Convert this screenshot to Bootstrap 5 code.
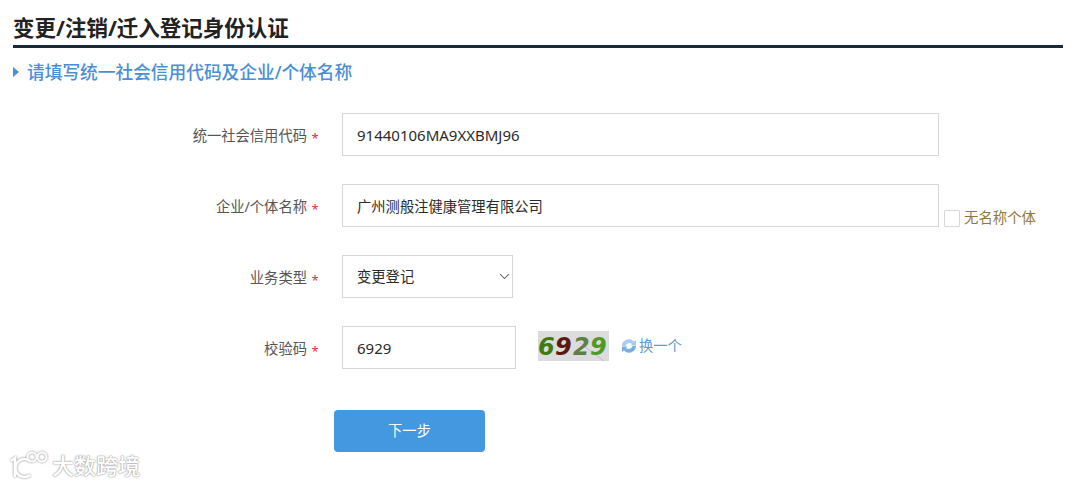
<!DOCTYPE html>
<html lang="zh-CN">
<head>
<meta charset="utf-8">
<title>变更/注销/迁入登记身份认证</title>
<link href="https://cdn.jsdelivr.net/npm/bootstrap@5.3.0/dist/css/bootstrap.min.css" rel="stylesheet">
<style>
html,body{height:485px;overflow:hidden;background:#fff}
body{font-family:"Noto Sans","Noto Sans CJK SC",sans-serif;position:relative;color:#333}
.page-wrap{padding:13px 17px 0 13px}
.main-title{font-size:21.5px;font-weight:700;line-height:30px;color:#222;margin:0;padding-bottom:2px;border-bottom:3px solid #1b2a38}
.sub-title{font-size:17.7px;font-weight:500;line-height:24px;color:#4a8fd6;margin:12px 0 0;padding-left:14px;position:relative}
.sub-title::before{content:"";position:absolute;left:0;top:7px;border-left:6px solid #4a8fd6;border-top:5px solid transparent;border-bottom:5px solid transparent}
.form-area{margin-top:29px}
.form-line{display:flex;align-items:flex-start;height:43px;margin-bottom:28px}
.label-cell{width:306px;flex:none;text-align:right;line-height:46px;font-size:14.3px;color:#555}
.label-cell i{font-style:normal;color:#d9304f;margin-left:4px;font-size:13px;display:inline-block;width:8px;text-align:center;position:relative;top:2px}
.field-cell{margin-left:23px}
.form-control.plain-input,.form-select.plain-input{height:43px;border-radius:0;border:1px solid #d6d6d6;font-size:14.3px;color:#2b2b2b;padding:0 14px;box-shadow:none;background-color:#fff}
.form-control.latin-input{font-size:15px}
.wide-input{width:597px}
.type-select{width:171px}
.code-input{width:174px}
.form-select.plain-input{background-image:url("data:image/svg+xml,%3csvg xmlns='http://www.w3.org/2000/svg' viewBox='0 0 16 16'%3e%3cpath fill='none' stroke='%23666' stroke-width='1.500' stroke-linecap='round' d='M2 5l6 6 6-6'/%3e%3c/svg%3e");background-position:right 0 center;background-size:15px 11px}
.no-name{display:flex;align-items:center;margin:25px 0 0 5px;font-size:14.4px;color:#8f7a3c;line-height:18px}
.no-name span{display:block;width:16px;height:17px;border:1px solid #d8d8d8;border-radius:1px;margin-right:4px}
.captcha-pic{display:block;margin:5px 0 0 22px;width:71px;height:30px;background:#dcdcdc}
.swap-link{display:flex;align-items:center;gap:2px;margin:6px 0 0 12px;color:#5b9bd5;font-size:14.3px;line-height:28px;text-decoration:none}
.next-btn{display:block;width:151px;height:42px;margin:41px 0 0 321px;background:#4498e0;border:0;border-radius:4px;color:#fff;font-size:14.3px;padding:0}
.next-btn:hover{background:#4498e0;color:#fff}
.mark-logo{position:absolute;left:9px;top:450px;display:flex;align-items:center;gap:3px}
.mark-text{font-size:22px;font-weight:500;line-height:30px;color:#fff;text-shadow:0 0 2px #999,0 0 1px #888}
</style>
</head>
<body>
<div class="page-wrap">
  <h1 class="main-title">变更/注销/迁入登记身份认证</h1>
  <h2 class="sub-title">请填写统一社会信用代码及企业/个体名称</h2>
  <form class="form-area" onsubmit="return false">
    <div class="form-line">
      <label class="label-cell">统一社会信用代码<i>*</i></label>
      <div class="field-cell"><input class="form-control plain-input latin-input wide-input" value="91440106MA9XXBMJ96"></div>
    </div>
    <div class="form-line">
      <label class="label-cell">企业/个体名称<i>*</i></label>
      <div class="field-cell"><input class="form-control plain-input wide-input" value="广州测般注健康管理有限公司"></div>
      <div class="no-name"><span></span>无名称个体</div>
    </div>
    <div class="form-line">
      <label class="label-cell">业务类型<i>*</i></label>
      <div class="field-cell"><select class="form-select plain-input type-select"><option>变更登记</option></select></div>
    </div>
    <div class="form-line">
      <label class="label-cell">校验码<i>*</i></label>
      <div class="field-cell"><input class="form-control plain-input latin-input code-input" value="6929"></div>
      <svg class="captcha-pic" viewBox="0 0 71 30">
        <path d="M42 12 L66 30" stroke="#c9b6d6" fill="none"/>
        <g font-family="'DejaVu Sans',sans-serif" font-weight="700" font-style="italic" font-size="24">
          <text x="0" y="24" fill="#3f7a12">6</text>
          <text x="17" y="24" fill="#5a1a12">9</text>
          <text x="35" y="24" fill="#5f7f45">2</text>
          <text x="52" y="24" fill="#4f9a26">9</text>
        </g>
      </svg>
      <a class="swap-link" href="#">
        <svg width="16" height="14" viewBox="0 0 16 14"><path d="M1 7 A7 7 0 0 1 13 2.500 L15 1 V6.500 H9.500 L11 5 A4 4 0 0 0 4.500 7z" fill="#a9cbef"/><path d="M15 7 A7 7 0 0 1 3 11.500 L1 13 V7.500 H6.500 L5 9 A4 4 0 0 0 11.500 7z" fill="#7aaee3"/></svg>
        换一个
      </a>
    </div>
    <button class="btn next-btn" type="button">下一步</button>
  </form>
</div>
<div class="mark-logo">
  <svg width="40" height="30" viewBox="0 0 40 30" fill="none" stroke="#fff" stroke-width="2.600" style="filter:drop-shadow(0 0 1px #888)">
    <path d="M2 11 L6 8 V27"/><path d="M21 11 A9 9 0 1 0 21 25"/><circle cx="23" cy="7" r="4.500" stroke-width="2"/><circle cx="33" cy="7" r="4.500" stroke-width="2"/>
  </svg>
  <span class="mark-text">大数跨境</span>
</div>
</body>
</html>
